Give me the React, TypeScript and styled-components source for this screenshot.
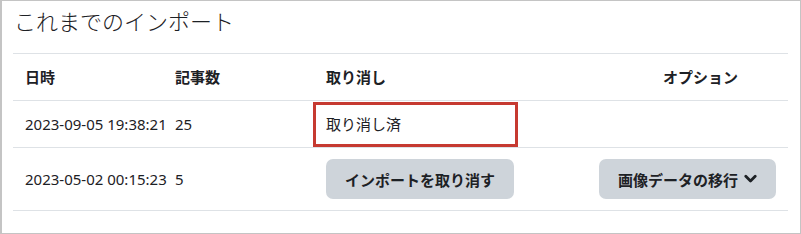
import React from "react";
import styled, { createGlobalStyle } from "styled-components";

const GlobalStyle = createGlobalStyle`
  html, body {
    margin: 0;
    padding: 0;
    background: #ffffff;
  }
  body {
    font-family: "Noto Sans", "Noto Sans CJK JP", sans-serif;
    color: #1d2125;
  }
`;

const Panel = styled.div`
  box-sizing: border-box;
  width: 801px;
  height: 234px;
  border: 1px solid #c4c4c4;
  border-left-width: 2px;
  padding: 4px 12px 0 11px;
`;

const Title = styled.h3`
  margin: 0 0 18px 1px;
  font-family: "Noto Sans CJK JP", sans-serif;
  font-size: 22px;
  font-weight: 300;
  line-height: 30px;
  color: #1d2125;
`;

const Table = styled.div`
  border-bottom: 1px solid #dee2e6;
`;

const Row = styled.div<{ $tall?: boolean }>`
  display: grid;
  grid-template-columns: 150px 151px 204px 1fr;
  align-items: center;
  border-top: 1px solid #dee2e6;
  min-height: ${(p) => (p.$tall ? "62px" : "46px")};
`;

const HeadCell = styled.div<{ $right?: boolean }>`
  padding: 0 ${(p) => (p.$right ? "50px" : "12px")} 0 12px;
  font-family: "Noto Sans CJK JP", sans-serif;
  font-size: 15px;
  font-weight: 700;
  line-height: 22px;
  text-align: ${(p) => (p.$right ? "right" : "left")};
`;

const Cell = styled.div<{ $right?: boolean }>`
  position: relative;
  align-self: stretch;
  display: flex;
  align-items: center;
  justify-content: ${(p) => (p.$right ? "flex-end" : "flex-start")};
  padding: 0 12px;
  font-size: 15px;
  line-height: 22px;
  white-space: nowrap;
`;

const Highlight = styled.div`
  position: absolute;
  left: -1px;
  right: 0;
  top: 1px;
  bottom: 0;
  border: 3px solid #c63a31;
  pointer-events: none;
`;

const Button = styled.button`
  display: inline-flex;
  align-items: center;
  gap: 6px;
  height: 40px;
  padding: 0 19px;
  border: none;
  border-radius: 7px;
  background: #ced4da;
  color: #1d2125;
  font-family: "Noto Sans CJK JP", sans-serif;
  font-size: 15px;
  font-weight: 700;
  cursor: pointer;
`;

const Chevron = () => (
  <svg width="13" height="10" viewBox="0 0 13 10" aria-hidden>
    <path d="M1.8 2.2 L6.5 6.9 L11.2 2.2" fill="none" stroke="#1d2125" strokeWidth="2.8" strokeLinecap="round" strokeLinejoin="round" />
  </svg>
);

const imports = [
  { date: "2023-09-05 19:38:21", count: 25, undone: true },
  { date: "2023-05-02 00:15:23", count: 5, undone: false },
];

export default function App() {
  return (
    <>
      <GlobalStyle />
      <Panel>
        <Title>これまでのインポート</Title>
        <Table>
          <Row>
            <HeadCell>日時</HeadCell>
            <HeadCell>記事数</HeadCell>
            <HeadCell>取り消し</HeadCell>
            <HeadCell $right>オプション</HeadCell>
          </Row>
          {imports.map((item) => (
            <Row key={item.date} $tall={!item.undone}>
              <Cell>{item.date}</Cell>
              <Cell>{item.count}</Cell>
              {item.undone ? (
                <Cell>
                  取り消し済
                  <Highlight />
                </Cell>
              ) : (
                <Cell>
                  <Button>インポートを取り消す</Button>
                </Cell>
              )}
              <Cell $right>
                {!item.undone && (
                  <Button>
                    画像データの移行
                    <Chevron />
                  </Button>
                )}
              </Cell>
            </Row>
          ))}
        </Table>
      </Panel>
    </>
  );
}
